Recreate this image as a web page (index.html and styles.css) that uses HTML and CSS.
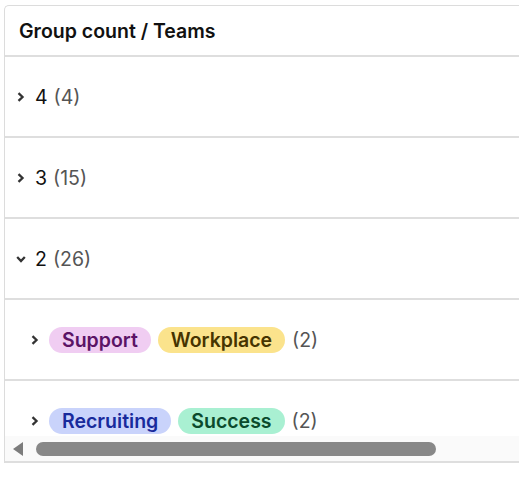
FILE: index.html
```html
<!DOCTYPE html>
<html>
<head>
<meta charset="utf-8">
<link rel="stylesheet" href="styles.css">
</head>
<body>
<div class="card">
  <div class="header">Group count / Teams</div>
  <div class="body">
    <div class="row">
      <svg class="chev" viewBox="0 0 12 12"><path d="M3.5 2.2 L7.5 6 L3.5 9.8" /></svg>
      <span class="val">4</span><span class="cnt">(4)</span>
    </div>
    <div class="row">
      <svg class="chev" viewBox="0 0 12 12"><path d="M3.5 2.2 L7.5 6 L3.5 9.8" /></svg>
      <span class="val">3</span><span class="cnt">(15)</span>
    </div>
    <div class="row">
      <svg class="chev" viewBox="0 0 12 12"><path d="M2.2 4 L6 8 L9.8 4" /></svg>
      <span class="val">2</span><span class="cnt">(26)</span>
    </div>
    <div class="row sub">
      <svg class="chev" viewBox="0 0 12 12"><path d="M3.5 2.2 L7.5 6 L3.5 9.8" /></svg>
      <span class="tag purple">Support</span><span class="tag yellow">Workplace</span><span class="cnt">(2)</span>
    </div>
    <div class="row sub">
      <svg class="chev" viewBox="0 0 12 12"><path d="M3.5 2.2 L7.5 6 L3.5 9.8" /></svg>
      <span class="tag blue">Recruiting</span><span class="tag green">Success</span><span class="cnt">(2)</span>
    </div>
    <div class="hscroll">
      <svg class="arrow" viewBox="0 0 12 14"><path d="M11 0 L11 14 L1 7 Z" /></svg>
      <div class="thumb"></div>
    </div>
  </div>
</div>
</body>
</html>
```
FILE: styles.css
```css
html, body {
  margin: 0;
  padding: 0;
  background: #ffffff;
}
body {
  font-family: Inter, "Noto Sans", sans-serif;
  color: #111;
  padding: 5px 0 0 4px;
  height: 499px;
  box-sizing: border-box;
  overflow: hidden;
}
.card {
  border-top: 1px solid #dcdcdc;
  border-left: 1px solid #dcdcdc;
  border-top-left-radius: 5px;
  width: 515px;
  box-sizing: border-box;
  background: #fff;
}
.header {
  height: 51px;
  box-sizing: border-box;
  padding: 0 0 0 14px;
  display: flex;
  align-items: center;
  font-size: 19.5px;
  font-weight: 600;
  color: #111;
  border-bottom: 2px solid #dedede;
}
.body {
  position: relative;
  height: 404px;
  overflow: hidden;
  border-bottom: 2px solid #dedede;
}
.row {
  height: 81px;
  box-sizing: border-box;
  border-bottom: 2px solid #dedede;
  display: flex;
  align-items: center;
  padding-left: 10px;
  font-size: 19.5px;
}
.row.sub {
  padding-left: 24px;
}
.chev {
  width: 12px;
  height: 12px;
  fill: none;
  stroke: #333;
  stroke-width: 2.3;
  margin-right: 8px;
}
.val {
  color: #111;
  margin-right: 6px;
}
.cnt {
  color: #555;
}
.tag {
  display: inline-flex;
  align-items: center;
  height: 26px;
  border-radius: 13px;
  padding: 0 13px;
  font-weight: 600;
  margin-right: 7px;
}
.purple { background: #f0cdf2; color: #5b1366; }
.yellow { background: #fbe38c; color: #463400; }
.blue { background: #c9d3fb; color: #182a9c; }
.green { background: #a9f0d2; color: #0b4a2c; }
.hscroll {
  position: absolute;
  left: 0;
  right: 0;
  bottom: 0;
  height: 25px;
  background: #fafafa;
  display: flex;
  align-items: center;
}
.arrow {
  width: 12px;
  height: 14px;
  fill: #7c7c7c;
  margin-left: 7px;
  margin-right: 12px;
}
.thumb {
  width: 400px;
  height: 14px;
  border-radius: 7px;
  background: #888;
}
```
